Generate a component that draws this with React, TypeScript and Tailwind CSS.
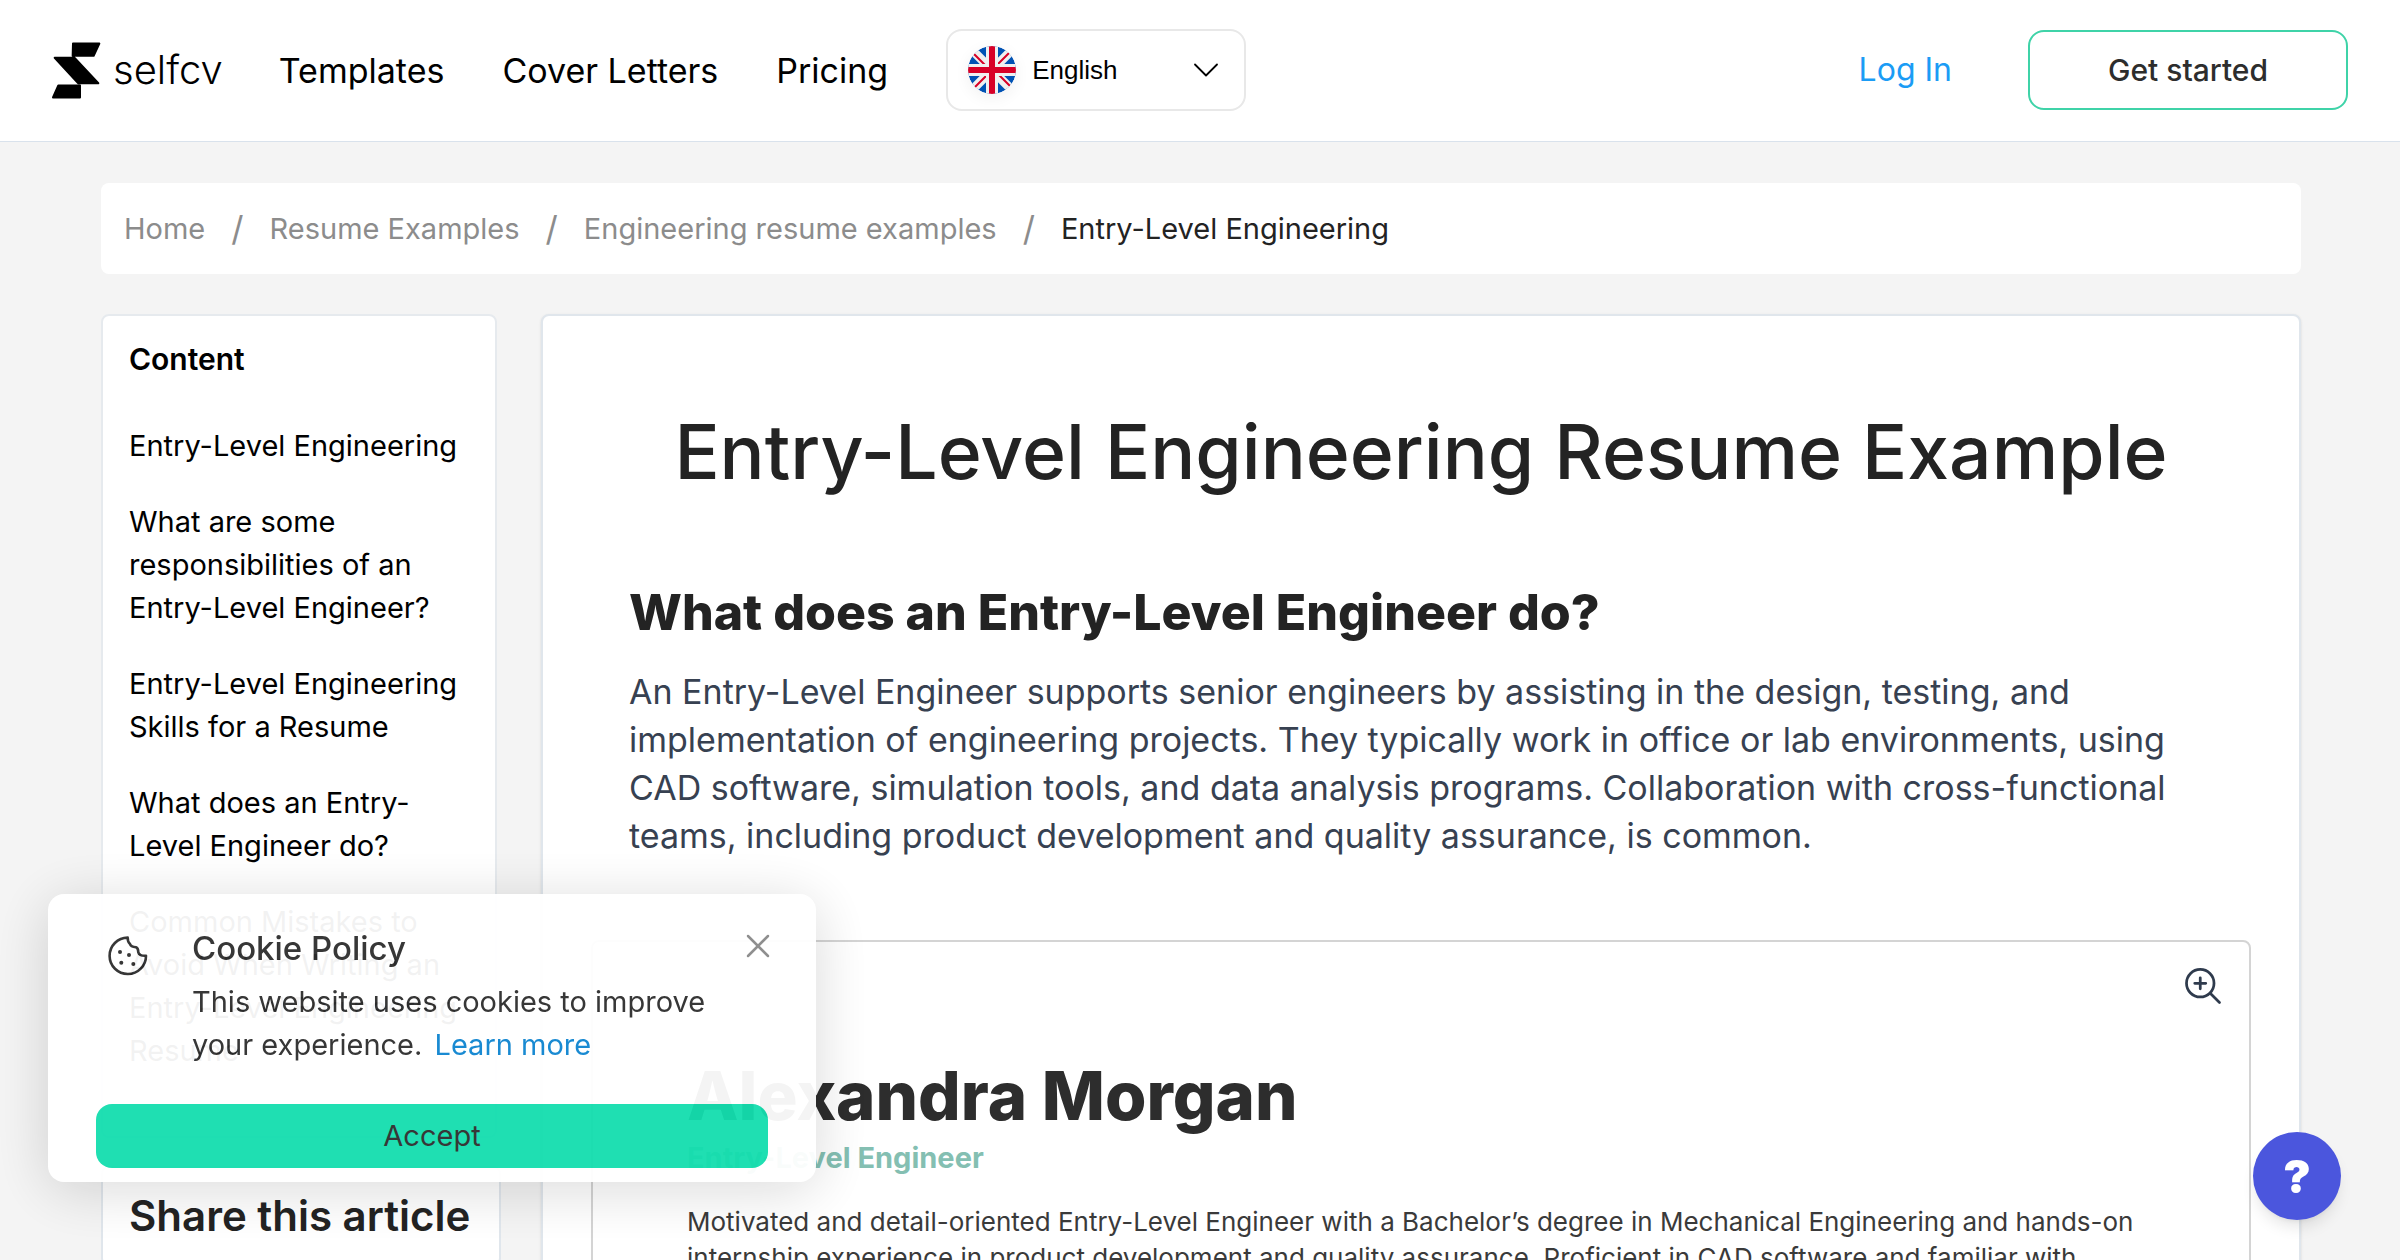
import { ChevronDown, X } from "lucide-react";
import { HiOutlineMagnifyingGlassPlus } from "react-icons/hi2";

const navLinks = ["Templates", "Cover Letters", "Pricing"];

const crumbs = ["Home", "Resume Examples", "Engineering resume examples"];

const contents = [
  "Entry-Level Engineering",
  "What are some responsibilities of an Entry-Level Engineer?",
  "Entry-Level Engineering Skills for a Resume",
  "What does an Entry-Level Engineer do?",
  "Common Mistakes to Avoid When Writing an Entry-Level Engineering Resume",
];

function Logo() {
  return (
    <a href="#" className="flex items-center gap-3">
      <svg viewBox="38 34 147 170" className="h-[57px] w-[49px]" strokeLinejoin="round" stroke="#000" strokeWidth="6">
        <path d="M101 38H180L163 75H100ZM46 81H106L177 157H116ZM57 164H122V200H41Z" />
      </svg>
      <span className="text-[40px] leading-none font-light">selfcv</span>
    </a>
  );
}

function Flag() {
  return (
    <svg viewBox="0 0 48 48" className="size-12 rounded-full shadow-[0_4px_16px_rgba(0,0,0,0.06)]">
      <clipPath id="disc">
        <circle cx="24" cy="24" r="24" />
      </clipPath>
      <g clipPath="url(#disc)">
        <path fill="#0052b4" d="M0 0H48V48H0Z" />
        <path stroke="#f0f0f0" strokeWidth="9" d="M0 0L48 48M48 0L0 48" />
        <path stroke="#d80027" strokeWidth="2" d="M5 7L19 21M29 19L43 5M19 29L5 43M29 27L43 41" />
        <path stroke="#f0f0f0" strokeWidth="12" d="M24 0V48M0 24H48" />
        <path stroke="#d80027" strokeWidth="6" d="M24 0V48M0 24H48" />
      </g>
    </svg>
  );
}

function CookieIcon() {
  return (
    <svg viewBox="0 0 40 40" className="size-10" fill="none" stroke="currentColor" strokeWidth="2.6" strokeLinejoin="round">
      <path d="M19.7 1.6A18.2 18.2 0 1 0 38 19.7C33.5 20 31 18.5 30.3 16.3Q30.2 12 28 11.3C24.5 11 22.5 10 22 8Q19.6 6 19.7 1.6Z" />
      <g fill="currentColor" stroke="none">
        <circle cx="12" cy="16" r="2" />
        <circle cx="21" cy="19" r="2" />
        <circle cx="13.3" cy="26.7" r="2" />
        <circle cx="25.3" cy="28" r="2" />
      </g>
    </svg>
  );
}

function Header() {
  return (
    <header className="flex items-center justify-between border-b border-[#d9e2ec] bg-white px-[52px] pt-[29px] pb-[30px]">
      <div className="flex items-center">
        <Logo />
        <nav className="ml-14 flex gap-[58px] text-[34px]">
          {navLinks.map((link) => (
            <a key={link} href="#">{link}</a>
          ))}
        </nav>
        <button className="ml-[58px] flex h-[82px] w-[300px] items-center gap-4 rounded-2xl border-2 border-[#e8e8e8] px-5 font-['Liberation_Sans',sans-serif] text-[26px]">
          <Flag />
          English
          <ChevronDown className="-mr-1 ml-auto size-11" strokeWidth={1} />
        </button>
      </div>
      <div className="flex items-center gap-[76px]">
        <a href="#" className="text-[32px] text-[#1b9cf5]">Log In</a>
        <button className="h-20 w-80 rounded-2xl border-2 border-[#3fd3a8] text-[30px] font-medium text-[#2d2d2d]">Get started</button>
      </div>
    </header>
  );
}

function Sidebar() {
  return (
    <aside className="w-[400px] shrink-0">
      <div className="mr-1 rounded-lg border-2 border-[#e6eaee] bg-white px-[26px] pt-[22px] pb-16">
        <h2 className="text-[30px] leading-[43px] font-semibold">Content</h2>
        <ul className="mt-[43px] space-y-[33px] text-[29px] leading-[43px]">
          {contents.map((item) => (
            <li key={item}>
              <a href="#">{item}</a>
            </li>
          ))}
        </ul>
      </div>
      <div className="mt-7 rounded-lg border-2 border-[#e0e6ec] bg-white px-[26px] py-6">
        <h2 className="text-[42px] leading-[48px] font-semibold whitespace-nowrap text-[#232323]">Share this article</h2>
      </div>
    </aside>
  );
}

function Article() {
  return (
    <main className="min-w-0 flex-1 rounded-lg border-2 border-[#e0e6ec] bg-white px-12 pt-[90px] shadow-sm">
      <h1 className="text-center text-[75px] leading-[92px] font-medium whitespace-nowrap text-[#232323]">Entry-Level Engineering Resume Example</h1>
      <section className="mt-[84px] px-[38px]">
        <h2 className="text-[50px] leading-[60px] font-extrabold text-[#232323]">What does an Entry-Level Engineer do?</h2>
        <p className="mt-[26px] text-[34px] leading-[48px] text-[#374151]">
          An Entry-Level Engineer supports senior engineers by assisting in the design, testing, and implementation of engineering projects. They typically work in office or lab environments, using CAD software, simulation tools, and data analysis programs. Collaboration with cross-functional teams, including product development and quality assurance, is common.
        </p>
      </section>
      <section className="relative mt-20 rounded-lg border-2 border-[#d4d4d4] px-[94px] pt-[118px] pb-24">
        <button aria-label="Zoom in" className="absolute top-[22px] right-6 text-[#2f3b4d]">
          <HiOutlineMagnifyingGlassPlus className="size-11" />
        </button>
        <h2 className="text-[67px] leading-[72px] font-extrabold text-[#2d2d2d]">Alexandra Morgan</h2>
        <h3 className="mt-1.5 text-[29px] leading-[40px] font-bold text-[#84bfb2]">Entry-Level Engineer</h3>
        <p className="mt-[26px] text-[26px] leading-[36px] text-[#3a3a3a]">
          Motivated and detail-oriented Entry-Level Engineer with a Bachelor’s degree in Mechanical Engineering and hands-on internship experience in product development and quality assurance. Proficient in CAD software and familiar with
        </p>
      </section>
    </main>
  );
}

function CookieBanner() {
  return (
    <div className="fixed bottom-[78px] left-12 w-[768px] rounded-2xl bg-white px-12 pt-[34px] pb-[14px] text-[#2d2d2d] opacity-95 shadow-[0_8px_60px_rgba(0,0,0,0.16)]">
      <div className="flex items-start">
        <span className="mt-2 ml-3">
          <CookieIcon />
        </span>
        <div className="ml-11 flex-1">
          <h2 className="text-[33px] leading-[40px] font-medium">Cookie Policy</h2>
          <p className="mt-3 text-[29px] leading-[43px]">
            This website uses cookies to improve your experience. <a href="#" className="ml-1 text-[#0d84d0]">Learn more</a>
          </p>
        </div>
        <button aria-label="Close" className="-mt-0.5 -mr-2.5 text-[#8a8a8a]">
          <X className="size-10" strokeWidth={1.5} />
        </button>
      </div>
      <button className="mt-[38px] h-16 w-full rounded-2xl bg-[#14deae] text-[29px]">Accept</button>
    </div>
  );
}

export default function App() {
  return (
    <div className="h-screen overflow-hidden bg-[#f4f4f4] font-[Inter,sans-serif] text-black">
      <Header />
      <div className="mt-[41px] mr-[99px] ml-[101px]">
        <nav className="flex h-[91px] items-center gap-[26px] rounded-lg bg-white px-[23px] text-[29px] text-[#8c8c8c]">
          {crumbs.map((crumb) => (
            <div key={crumb} className="flex items-center gap-[26px]">
              <a href="#">{crumb}</a>
              <span className="text-[34px] leading-none">/</span>
            </div>
          ))}
          <span className="text-[#232323]">Entry-Level Engineering</span>
        </nav>
        <div className="mt-10 flex items-start gap-10">
          <Sidebar />
          <Article />
        </div>
      </div>
      <CookieBanner />
      <button aria-label="Help" className="fixed right-[59px] bottom-10 size-[88px] rounded-full bg-[#4b56dd] text-[46px] font-black text-white shadow-lg">?</button>
    </div>
  );
}
